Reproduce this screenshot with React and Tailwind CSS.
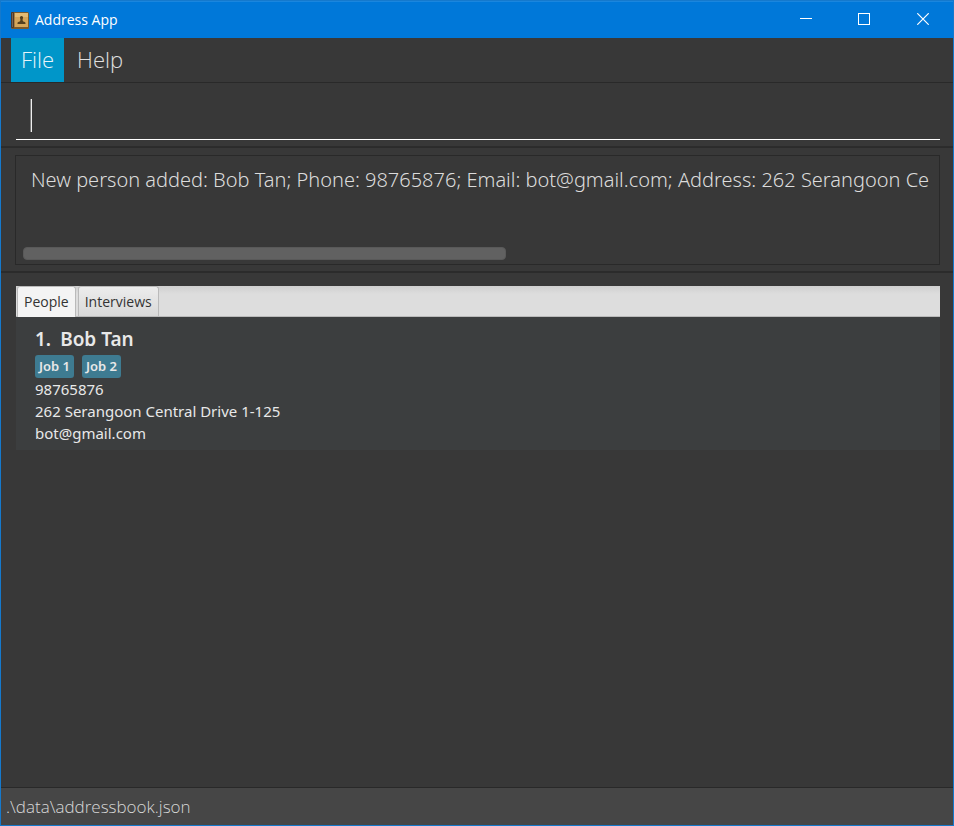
import React, { useState } from "react";

function BookIcon() {
  return (
    <svg width="18" height="17" viewBox="0 0 18 17" aria-hidden="true" className="shrink-0">
      <rect x="0" y="0" width="18" height="17" rx="1.5" fill="#7a5a2c" />
      <rect x="0" y="0" width="3" height="16" rx="1" fill="#4d3a2b" />
      <rect x="1" y="1" width="1" height="14" fill="#7b6450" />
      <rect x="3.5" y="1" width="13.5" height="14" fill="#d5a65a" />
      <rect x="4" y="1" width="13" height="4" fill="#e3bb74" />
      <path d="M10.5 4a1.6 1.6 0 0 1 1.6 1.6c0 .9-.5 1.3-.5 2.2 0 1 .4 1.7 1.4 1.900 1.200.2 1.500.5 1.500 2.300h-8c0-1.800.3-2.100 1.500-2.300 1-.2 1.400-.9 1.400-1.900 0-.9-.5-1.300-.5-2.200A1.600 1.600 0 0 1 10.500 4Z" fill="#54401f" />
    </svg>
  );
}

function TitleBar() {
  return (
    <header className="flex h-[37px] items-center border-t border-[#1a86de] bg-[#0078d9] pl-[10px] text-white">
      <BookIcon />
      <h1 className="ml-[6px] flex-1 text-[14px] leading-5">Address App</h1>
      <div className="flex self-stretch pb-[2px]">
        <button aria-label="Minimize" className="flex w-[58px] items-center justify-center">
          <svg width="12" height="12" viewBox="0 0 12 12" fill="none" stroke="currentColor">
            <path d="M0 5.5h12" />
          </svg>
        </button>
        <button aria-label="Maximize" className="flex w-[58px] items-center justify-center">
          <svg width="12" height="12" viewBox="0 0 12 12" fill="none" stroke="currentColor">
            <rect x=".5" y=".5" width="11" height="11" />
          </svg>
        </button>
        <button aria-label="Close" className="flex w-[60px] items-center justify-center">
          <svg width="12" height="12" viewBox="0 0 12 12" fill="none" stroke="currentColor" strokeWidth="1.2">
            <path d="M.3.3l11.4 11.4M11.7.3.3 11.7" />
          </svg>
        </button>
      </div>
    </header>
  );
}

function MenuBar() {
  return (
    <nav className="flex h-11 pl-[10px] text-[22px] font-light leading-[30px]">
      <button className="bg-[#0096c9] px-[10px] pb-[2px] text-[#e6f5fa]">File</button>
      <button className="px-[13px] pb-[2px] text-[#e0e0e0]">Help</button>
    </nav>
  );
}

const tabs = ["People", "Interviews"];
const person = {
  name: "Bob Tan",
  jobs: ["Job 1", "Job 2"],
  lines: ["98765876", "262 Serangoon Central Drive 1-125", "bot@gmail.com"],
};

function PersonCard() {
  return (
    <article className="bg-[#3c3e3f] px-[19px] pt-[10px] pb-[6px] font-['Noto_Sans',sans-serif] text-[#e8e8e8]">
      <h2 className="flex gap-[9px] text-[19px] font-semibold leading-6">
        <span>1.</span>
        <span>{person.name}</span>
      </h2>
      <ul className="mt-1 flex gap-2">
        {person.jobs.map((job) => (
          <li key={job} className="rounded-[3px] bg-[#3e7b91] px-1 text-[13px] font-semibold leading-[23px]">
            {job}
          </li>
        ))}
      </ul>
      {person.lines.map((line) => (
        <p key={line} className="text-[15px] leading-[22px]">{line}</p>
      ))}
    </article>
  );
}

export default function App() {
  const [active, setActive] = useState("People");
  return (
    <div className="flex min-h-screen flex-col border border-[#1579cc] bg-[#383838] font-['Open_Sans','Noto_Sans',sans-serif]">
      <TitleBar />
      <MenuBar />
      <section className="border-y border-t-[#292929] border-b-[#2c2c2c] pr-[13px] pb-[6px] pl-[15px]">
        <input
          aria-label="Command"
          autoFocus
          className="block h-[57px] w-full border-b border-white bg-transparent bg-[linear-gradient(90deg,#777_50%,#eee_50%)] bg-[length:2px_33px] bg-[position:14px_16px] bg-no-repeat px-[14px] text-[24px] font-light text-white caret-transparent outline-none"
        />
      </section>
      <section className="border-y border-[#2b2b2b] pt-[7px] pr-[13px] pb-[6px] pl-[14px]">
        <div className="flex h-[110px] flex-col justify-between overflow-hidden border border-[#292929] pt-2 pr-[2px] pb-1 pl-[7px]">
          <output className="block overflow-hidden pl-2 font-['Noto_Sans',sans-serif] text-[20px] font-light leading-8 whitespace-nowrap text-[#dcdcdc]">
            New person added: Bob Tan; Phone: 98765876; Email: bot@gmail.com; Address: 262 Serangoon Ce
          </output>
          <div className="pr-[2px]">
            <div className="h-[13px] w-[53%] rounded-[4px] border border-[#595959] bg-[#616161]" />
          </div>
        </div>
      </section>
      <main className="flex-1 border-y border-t-[#2b2b2b] border-b-[#292929] pt-[13px] pr-[13px] pl-[15px]">
        <div role="tablist" className="flex h-[31px] gap-[2px] border-b border-[#bababa] bg-[linear-gradient(#cfcfcf,#dddddd_8px)] pl-px text-[14px] text-[#333]">
          {tabs.map((tab) => (
            <button
              key={tab}
              role="tab"
              aria-selected={active === tab}
              onClick={() => setActive(tab)}
              className={
                active === tab
                  ? "-mb-px rounded-t-[3px] border border-b-0 border-[#bababa] bg-[#f4f4f4] px-[6px] pb-px"
                  : "rounded-t-[3px] border border-b-0 border-[#bababa] bg-[linear-gradient(#ececec,#d9d9d9)] px-[6px]"
              }
            >
              {tab}
            </button>
          ))}
        </div>
        <PersonCard />
      </main>
      <footer className="flex h-[37px] items-center bg-[#464646] px-[5px] text-[17px] font-light text-[#d8d8d8]">
        .\data\addressbook.json
      </footer>
    </div>
  );
}
